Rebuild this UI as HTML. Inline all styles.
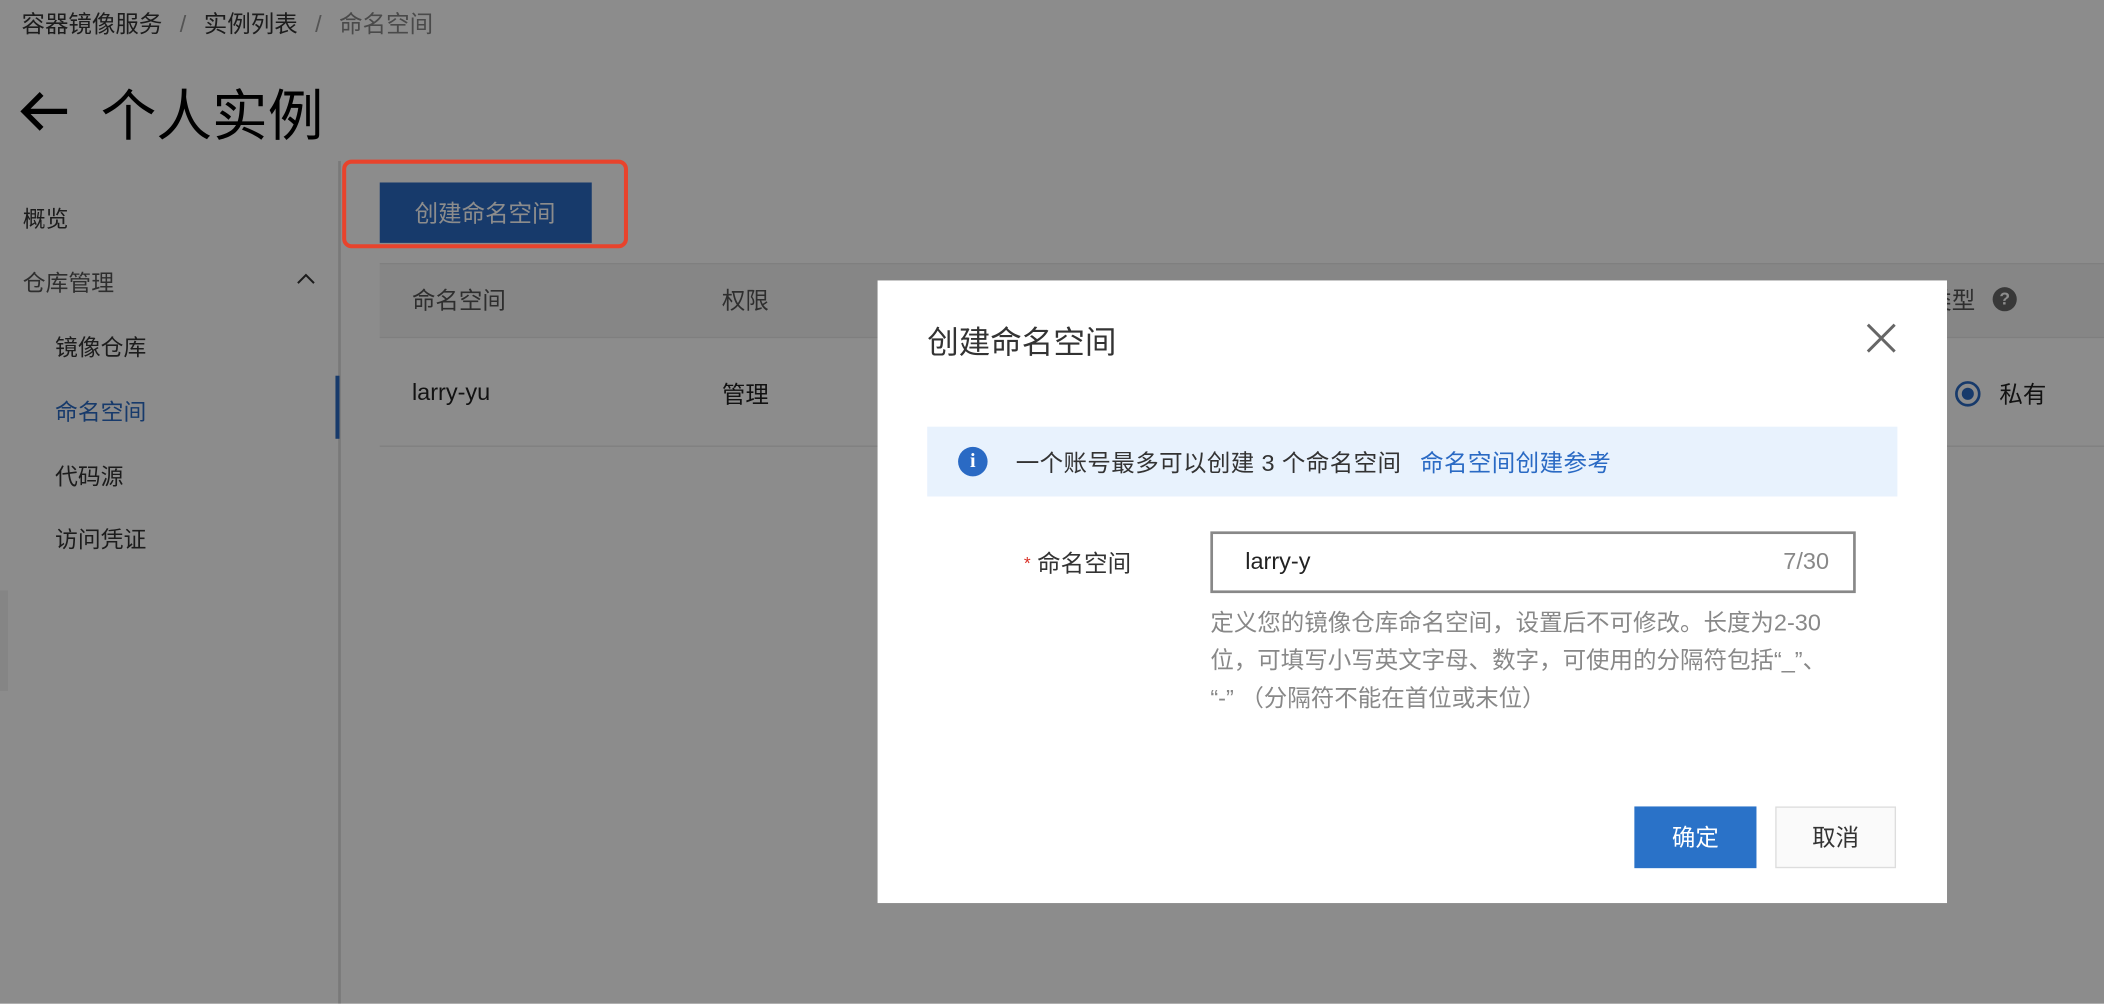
<!DOCTYPE html>
<html><head><meta charset="utf-8"><style>
html,body{margin:0;padding:0;width:2104px;height:1004px;overflow:hidden;background:#fff}
#w{position:absolute;left:0;top:0;width:1568px;height:748px;transform:scale(1.34184);transform-origin:0 0;font-family:"Liberation Sans","Noto Sans CJK SC",sans-serif;color:#333}
.a{position:absolute;white-space:nowrap}
#ov{position:absolute;left:0;top:0;width:1568px;height:748px;background:rgba(0,0,0,0.45)}
</style></head><body><div id="w">
<div class="a" style="left:16px;top:5px;font-size:17.5px;color:#333">容器镜像服务<span style="color:#999;margin:0 13px">/</span>实例列表<span style="color:#999;margin:0 13px">/</span><span style="color:#888">命名空间</span></div>
<svg class="a" style="left:14px;top:66px" width="38" height="34" viewBox="0 0 38 34"><path d="M36 17H4M17 4L4 17l13 13" fill="none" stroke="#000" stroke-width="4"/></svg>
<div class="a" style="left:75px;top:53px;font-size:41.5px;color:#000">个人实例</div>
<div class="a" style="left:17px;top:149px;font-size:17px">概览</div>
<div class="a" style="left:17px;top:197px;font-size:17px;color:#555">仓库管理</div>
<svg class="a" style="left:220px;top:203px" width="16" height="10"><path d="M2 8l6-6 6 6" fill="none" stroke="#333" stroke-width="1.5"/></svg>
<div class="a" style="left:41px;top:245px;font-size:17px">镜像仓库</div>
<div class="a" style="left:41px;top:293px;font-size:17px;color:#2a6ac4">命名空间</div>
<div class="a" style="left:41px;top:341px;font-size:17px">代码源</div>
<div class="a" style="left:41px;top:388px;font-size:17px">访问凭证</div>
<div class="a" style="left:252px;top:120px;width:2px;height:628px;background:#ddd"></div>
<div class="a" style="left:250px;top:280px;width:3px;height:47px;background:#2a6ac4"></div>
<div class="a" style="left:0;top:440px;width:6px;height:75px;background:#f2f2f2"></div>
<div class="a" style="left:283px;top:136px;width:158px;height:45px;background:#2a6ac4"></div>
<div class="a" style="left:309px;top:146px;font-size:17.5px;color:#fff">创建命名空间</div>
<div class="a" style="left:283px;top:196px;width:1285px;height:54px;background:#f5f5f5;border-top:1px solid #e8e8e8;border-bottom:1px solid #e8e8e8"></div>
<div class="a" style="left:307px;top:211px;font-size:17.5px;color:#555">命名空间</div>
<div class="a" style="left:538px;top:211px;font-size:17.5px;color:#555">权限</div>
<div class="a" style="left:1437px;top:211px;font-size:17.5px;color:#555">类型</div>
<div class="a" style="left:1485px;top:214px;width:18px;height:18px;border-radius:50%;background:#666;color:#fff;font-size:13px;font-weight:bold;text-align:center;line-height:18px">?</div>
<div class="a" style="left:307px;top:282px;font-size:17.5px;color:#222">larry-yu</div>
<div class="a" style="left:538px;top:281px;font-size:17.5px;color:#222">管理</div>
<div class="a" style="left:1457px;top:284px;width:19px;height:19px;border-radius:50%;border:2px solid #2a6ac4;box-sizing:border-box"></div>
<div class="a" style="left:1462px;top:289px;width:9px;height:9px;border-radius:50%;background:#2a6ac4"></div>
<div class="a" style="left:1490px;top:281px;font-size:17.5px;color:#222">私有</div>
<div class="a" style="left:283px;top:332px;width:1285px;height:1px;background:#e8e8e8"></div>
<div id="ov"></div>
<div class="a" style="left:255px;top:119px;width:207px;height:60px;border:3px solid #e8432c;border-radius:7px"></div>
<div class="a" style="left:654px;top:209px;width:797px;height:464px;background:#fff"></div>
<div class="a" style="left:691px;top:236px;font-size:23.5px;color:#333">创建命名空间</div>
<svg class="a" style="left:1390px;top:240px" width="24" height="24"><path d="M2 2l20 20M22 2L2 22" stroke="#666" stroke-width="2.2"/></svg>
<div class="a" style="left:691px;top:318px;width:723px;height:52px;background:#e8f2fd"></div>
<div class="a" style="left:714px;top:333px;width:22px;height:22px;border-radius:50%;background:#2a6ac4;color:#fff;font-size:15px;font-weight:bold;text-align:center;line-height:22px;font-family:'Liberation Serif',serif">i</div>
<div class="a" style="left:757px;top:332px;font-size:17.5px;color:#333;letter-spacing:0.3px">一个账号最多可以创建 3 个命名空间<span style="color:#2a6ac4;margin-left:14px">命名空间创建参考</span></div>
<div class="a" style="left:763px;top:407px;font-size:17.5px;color:#333"><span style="color:#d93026;font-size:13px;vertical-align:2px">*</span> 命名空间</div>
<div class="a" style="left:902px;top:396px;width:481px;height:46px;border:2px solid #888;box-sizing:border-box"></div>
<div class="a" style="left:928px;top:408px;font-size:17.5px;color:#222">larry-y</div>
<div class="a" style="left:1329px;top:408px;font-size:17.5px;color:#888">7/30</div>
<div class="a" style="left:902px;top:450px;font-size:17.5px;color:#888;line-height:28px">定义您的镜像仓库命名空间，设置后不可修改。长度为2-30<br>位，可填写小写英文字母、数字，可使用的分隔符包括“_”、<br>“-” （分隔符不能在首位或末位）</div>
<div class="a" style="left:1218px;top:601px;width:91px;height:46px;background:#2a72c8;color:#fff;font-size:17.5px;text-align:center;line-height:46px">确定</div>
<div class="a" style="left:1323px;top:601px;width:90px;height:46px;background:#fafafa;border:1px solid #ddd;box-sizing:border-box;color:#333;font-size:17.5px;text-align:center;line-height:44px">取消</div>
</div></body></html>
